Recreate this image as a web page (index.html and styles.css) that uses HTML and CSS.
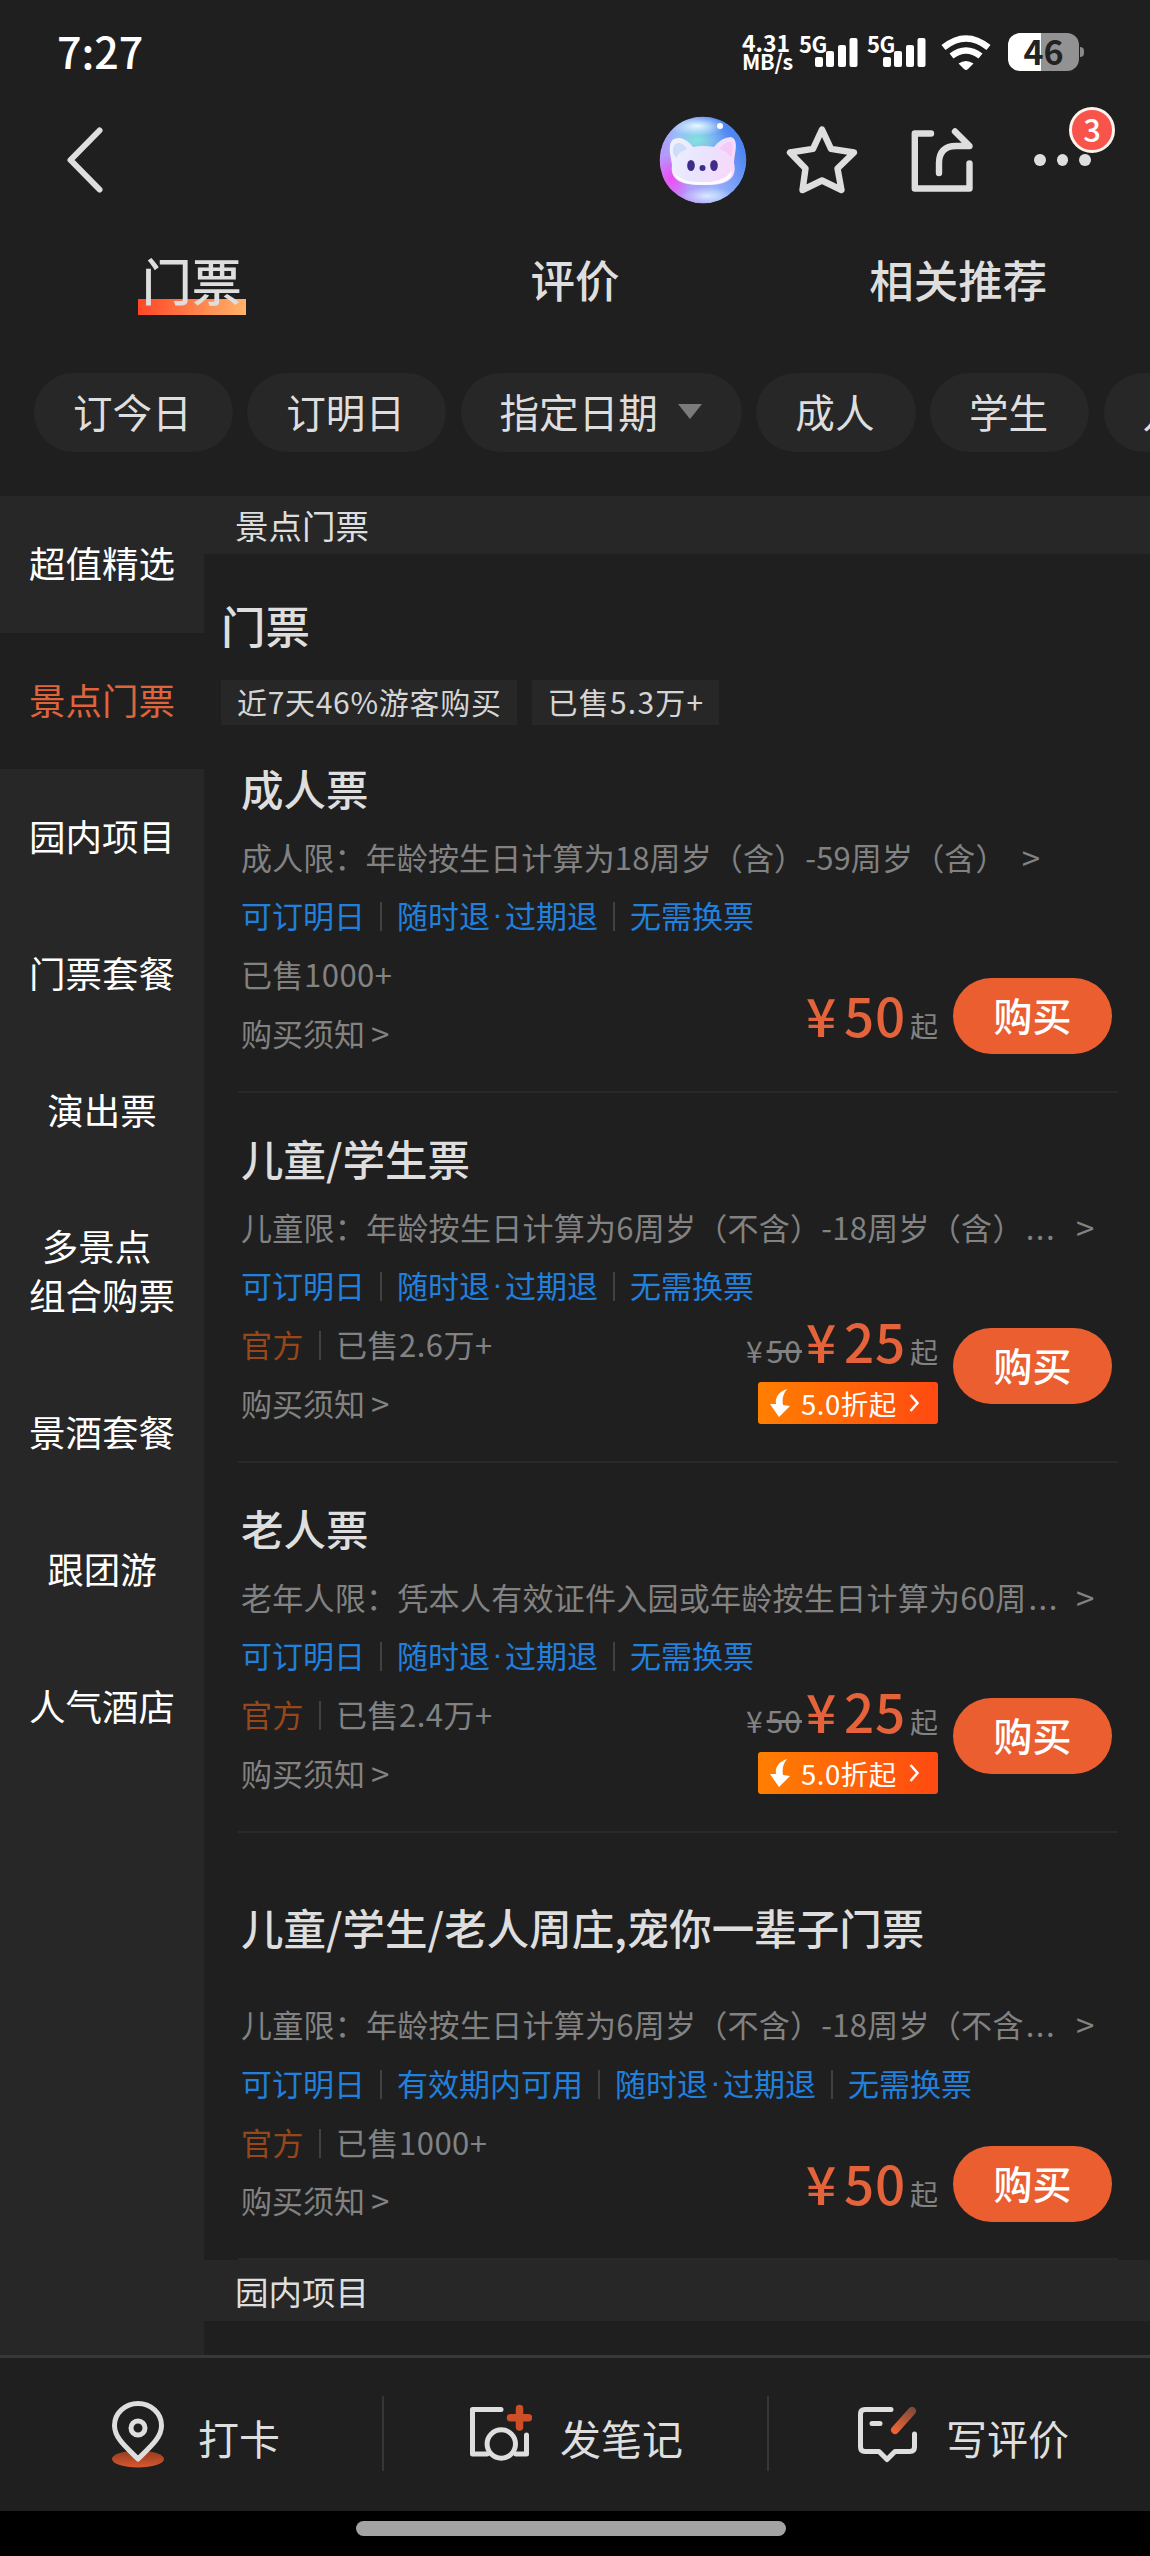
FILE: index.html
```html
<!DOCTYPE html>
<html lang="zh-CN">
<head>
<meta charset="utf-8">
<title>景点门票</title>
<link rel="stylesheet" href="styles.css">
</head>
<body>
<svg class="defs" width="0" height="0" aria-hidden="true">
  <defs>
    <linearGradient id="fade-orange" x1="0" y1="0" x2="0" y2="1"><stop offset="0" stop-color="#8f3c20"/><stop offset="1" stop-color="#d9582f"/></linearGradient>
    <linearGradient id="pencil" gradientUnits="userSpaceOnUse" x1="56" y1="6" x2="38" y2="30"><stop offset="0" stop-color="#7a4a38"/><stop offset="1" stop-color="#ee6233"/></linearGradient>
    <linearGradient id="orb" x1="0.1" y1="0.8" x2="0.9" y2="0.3"><stop offset="0" stop-color="#c08bf8"/><stop offset="0.45" stop-color="#9db4fb"/><stop offset="1" stop-color="#4d86f2"/></linearGradient>
    <radialGradient id="orb-pink"><stop offset="0" stop-color="#f04af4"/><stop offset="1" stop-color="#f04af4" stop-opacity="0"/></radialGradient>
    <radialGradient id="orb-mint"><stop offset="0" stop-color="#7fe6da"/><stop offset="1" stop-color="#8fd8f0" stop-opacity="0"/></radialGradient>
    <radialGradient id="orb-light"><stop offset="0" stop-color="#e4fbff"/><stop offset="1" stop-color="#dff4ff" stop-opacity="0"/></radialGradient>
    <linearGradient id="face" x1="0" y1="0" x2="1" y2="0.3"><stop offset="0" stop-color="#eef3ff"/><stop offset="0.55" stop-color="#e9e4fd"/><stop offset="1" stop-color="#f6d9fb"/></linearGradient>
    <clipPath id="orb-clip"><circle cx="44" cy="44" r="43.500"/></clipPath>
    <symbol id="signal" viewBox="0 0 44 30"><g fill="#fff"><rect x="0" y="20" width="8" height="10" rx="2"/><rect x="11" y="14" width="8" height="16" rx="2"/><rect x="23" y="8" width="8" height="22" rx="2"/><rect x="34.500" y="1" width="8" height="29" rx="2"/></g></symbol>
    <symbol id="drop" viewBox="0 0 20 28"><path d="M17 0C8 3 5 9 6 15L0 15 9 28 20 17 13 16C12 10 13 5 17 0Z" fill="#fff"/></symbol>
    <symbol id="more" viewBox="0 0 12 20"><path d="M2.500 2 9.500 10 2.500 18" fill="none" stroke="#fff" stroke-width="2.500"/></symbol>
  </defs>
</svg>
<div class="screen">
  <div class="status">
    <span class="clock">7:27</span>
    <div class="status-right">
      <div class="rate"><span>4.31</span><span>MB/s</span></div>
      <div class="net"><span>5G</span><svg width="44" height="30"><use href="#signal"/></svg></div>
      <div class="net"><span>5G</span><svg width="44" height="30"><use href="#signal"/></svg></div>
      <svg class="wifi" width="50" height="36" viewBox="0 0 50 36"><g fill="none" stroke="#fff" stroke-width="6.500"><path d="M2.500 12.500Q25 -5.500 47.500 12.500"/><path d="M10.500 21Q25 10 39.500 21"/></g><path d="M17.500 28.500Q25 23.500 32.500 28.500L27 34Q25 36 23 34Z" fill="#fff"/></svg>
      <div class="battery"><span class="level">46</span><i></i></div>
    </div>
  </div>

  <div class="nav">
    <svg class="back" width="40" height="68" viewBox="0 0 40 68"><path d="M34.500 4.500 5.500 34 34.500 63.500" fill="none" stroke="#dedede" stroke-width="6" stroke-linecap="round" stroke-linejoin="round"/></svg>
    <div class="nav-icons">
      <svg class="orb" width="88" height="88" viewBox="0 0 88 88"><g clip-path="url(#orb-clip)">
        <circle cx="44" cy="44" r="43.500" fill="url(#orb)"/>
        <ellipse cx="13" cy="62" rx="19" ry="24" fill="url(#orb-pink)"/>
        <ellipse cx="38" cy="24" rx="30" ry="19" fill="url(#orb-mint)"/>
        <ellipse cx="38" cy="10" rx="28" ry="10" fill="url(#orb-light)"/>
        <ellipse cx="48" cy="80" rx="26" ry="9" fill="url(#orb-light)" opacity=".8"/>
        <path d="M11 37Q9 21 21 22Q29 24 34 31Q44 29 55 31Q63 21 72 21Q79 23 76 38Q75 44 75 47C79 64 66 70 43 69C22 69 11 64 13 49Q12 43 11 37Z" fill="url(#face)"/>
        <path d="M14 37Q13 26 21 27Q26 29 28 33Q20 36 17 42Z" fill="#cddcf8"/>
        <path d="M60 33Q67 25 72 26Q75 30 72 41Q68 35 60 33Z" fill="#f5c8f7"/>
        <path d="M14 56Q23 67 44 66Q65 67 73 54Q74 69 44 69Q18 69 14 56Z" fill="#fff" opacity=".85"/>
        <ellipse cx="32" cy="49.500" rx="3.800" ry="5.500" fill="#3d2d86"/><ellipse cx="55" cy="49.500" rx="3.800" ry="5.500" fill="#3d2d86"/><circle cx="43.500" cy="52" r="3" fill="#3d2d86"/>
        <circle cx="61" cy="10" r="3" fill="#fff"/>
      </g></svg>
      <svg class="star" width="72" height="70" viewBox="0 0 72 70"><path d="M36 4.500 45 23.800 68 27.500 51.500 43.500 55.500 65 36 55.500 16.500 65 19.500 43.500 4 27.500 27 23.800Z" fill="none" stroke="#dedede" stroke-width="6.400" stroke-linejoin="round"/></svg>
      <svg class="share" width="64" height="66" viewBox="0 0 64 66"><g fill="none" stroke="#dedede" stroke-width="6.400" stroke-linecap="round" stroke-linejoin="round"><path d="M20 6.500H3.800V61.500H58.500V36.500"/><path d="M28 46V36Q28 19 45 19H58.500L44 4.500"/></g></svg>
      <div class="menu"><i></i><i></i><i></i><b>3</b></div>
    </div>
  </div>

  <div class="tabs"><div class="tab on"><span>门票</span></div><div class="tab"><span>评价</span></div><div class="tab"><span>相关推荐</span></div></div>

  <div class="chips"><span>订今日</span><span>订明日</span><span class="date">指定日期<i></i></span><span>成人</span><span>学生</span><span>儿童</span></div>

  <div class="main">
    <div class="side">
      <div>超值精选</div><div class="on">景点门票</div><div>园内项目</div><div>门票套餐</div><div>演出票</div>
      <div class="two"><span class="first">多景点</span><span>组合购票</span></div>
      <div>景酒套餐</div><div>跟团游</div><div>人气酒店</div>
    </div>
    <div class="list">
      <div class="section">景点门票</div>
      <div class="intro">
        <h2>门票</h2>
        <div class="facts"><span>近7天46%游客购买</span><span>已售5.3万+</span></div>
      </div>

      <div class="ticket">
        <h3>成人票</h3>
        <p class="limit"><span>成人限：年龄按生日计算为18周岁（含）-59周岁（含）</span><em>&gt;</em></p>
        <p class="perks"><span>可订明日</span><span>随时退<u>·</u>过期退</span><span>无需换票</span></p>
        <div class="foot">
          <div class="sales"><p><span>已售1000+</span></p><p class="notice">购买须知<em>&gt;</em></p></div>
          <div class="buy"><div class="cost"><div class="price"><b><i>¥</i>50</b><small>起</small></div></div><button>购买</button></div>
        </div>
      </div>

      <div class="ticket">
        <h3>儿童/学生票</h3>
        <p class="limit cut"><span>儿童限：年龄按生日计算为6周岁（不含）-18周岁（含）<q>...</q></span><em>&gt;</em></p>
        <p class="perks"><span>可订明日</span><span>随时退<u>·</u>过期退</span><span>无需换票</span></p>
        <div class="foot">
          <div class="sales"><p><span class="official">官方</span><span>已售2.6万+</span></p><p class="notice">购买须知<em>&gt;</em></p></div>
          <div class="buy"><div class="cost"><div class="price"><span class="was">¥<s>50</s></span><b><i>¥</i>25</b><small>起</small></div><div class="deal"><svg width="20" height="28"><use href="#drop"/></svg><span>5.0折起</span><svg width="12" height="20"><use href="#more"/></svg></div></div><button>购买</button></div>
        </div>
      </div>

      <div class="ticket">
        <h3>老人票</h3>
        <p class="limit cut"><span>老年人限：凭本人有效证件入园或年龄按生日计算为60周<q>...</q></span><em>&gt;</em></p>
        <p class="perks"><span>可订明日</span><span>随时退<u>·</u>过期退</span><span>无需换票</span></p>
        <div class="foot">
          <div class="sales"><p><span class="official">官方</span><span>已售2.4万+</span></p><p class="notice">购买须知<em>&gt;</em></p></div>
          <div class="buy"><div class="cost"><div class="price"><span class="was">¥<s>50</s></span><b><i>¥</i>25</b><small>起</small></div><div class="deal"><svg width="20" height="28"><use href="#drop"/></svg><span>5.0折起</span><svg width="12" height="20"><use href="#more"/></svg></div></div><button>购买</button></div>
        </div>
      </div>

      <div class="ticket tall">
        <h3>儿童/学生/老人周庄,宠你一辈子门票</h3>
        <p class="limit cut"><span>儿童限：年龄按生日计算为6周岁（不含）-18周岁（不含<q>...</q></span><em>&gt;</em></p>
        <p class="perks"><span>可订明日</span><span>有效期内可用</span><span>随时退<u>·</u>过期退</span><span>无需换票</span></p>
        <div class="foot">
          <div class="sales"><p><span class="official">官方</span><span>已售1000+</span></p><p class="notice">购买须知<em>&gt;</em></p></div>
          <div class="buy"><div class="cost"><div class="price"><b><i>¥</i>50</b><small>起</small></div></div><button>购买</button></div>
        </div>
      </div>

      <div class="section next">园内项目</div>
    </div>
  </div>

  <div class="actions">
    <div class="action pin">
      <svg width="54" height="68" viewBox="0 0 54 68"><ellipse cx="27" cy="59" rx="26" ry="8.500" fill="url(#fade-orange)"/><path d="M27 59C15 47 3.500 38 3.500 25.500A23.500 22 0 0 1 50.500 25.500C50.500 38 39 47 27 59Z" fill="#1f1f1f" stroke="#dedede" stroke-width="5" stroke-linejoin="round"/><circle cx="27" cy="28" r="7" fill="none" stroke="#dedede" stroke-width="5"/></svg>
      <span>打卡</span>
    </div>
    <div class="action note">
      <svg width="64" height="68" viewBox="0 0 64 68"><g fill="none" stroke="#dedede" stroke-width="5" stroke-linecap="round" stroke-linejoin="round"><path d="M33 9.500H4.500V54H19M48 54H58.500V35"/><circle cx="33.300" cy="44" r="14.200"/></g><path d="M51.500 8.500V27M42.500 17.700H60.500" stroke="#cc4f27" stroke-width="7.500" stroke-linecap="round"/></svg>
      <span>发笔记</span>
    </div>
    <div class="action review">
      <svg width="64" height="68" viewBox="0 0 64 68"><g fill="none" stroke="#dedede" stroke-width="5" stroke-linecap="round" stroke-linejoin="round"><path d="M35 9.500H9Q4.500 9.500 4.500 14V47Q4.500 51.500 9 51.500H23L31 59.500 39 51.500H54Q58.500 51.500 58.500 47V34"/><path d="M16 23.500H24"/></g><path d="M56 11 39 30" stroke="url(#pencil)" stroke-width="8" stroke-linecap="round"/></svg>
      <span>写评价</span>
    </div>
  </div>
  <div class="home"><i></i></div>
</div>
</body>
</html>
```
FILE: styles.css
```css
* { box-sizing: border-box; margin: 0; padding: 0; }
body { background: #1f1f1f; color: #dedede; font-family: "Noto Sans CJK SC", sans-serif; }
i, em { font-style: normal; }
svg { display: block; flex: none; }
.defs { position: absolute; }
.screen { width: 1150px; height: 2556px; overflow: hidden; display: flex; flex-direction: column; white-space: nowrap; }

/* status bar */
.status { height: 96px; padding: 11px 66px 0 57px; display: flex; justify-content: space-between; color: #fff; }
.clock { font-size: 43px; line-height: 78px; height: 78px; font-weight: 500; }
.status-right { display: flex; padding-top: 22px; }
.rate { width: 57px; margin-top: -1px; font: bold 23px/20px "Noto Sans CJK SC", sans-serif; display: flex; flex-direction: column; }
.rate span { height: 19px; }
.rate span + span { font-size: 21.500px; letter-spacing: -.3px; }
.net { width: 68px; display: flex; align-items: flex-start; }
.net span { width: 16px; font: bold 22px/21px "Noto Sans CJK SC", sans-serif; letter-spacing: -.5px; }
.net svg { margin-top: 4px; }
.wifi { margin: 2px 17px 0 6px; }
.battery { display: flex; align-items: center; height: 38px; }
.battery .level { width: 71px; height: 38px; border-radius: 12px; background: linear-gradient(90deg, #fff 46%, #929292 46%); color: #222; font: bold 34px/36px "Noto Sans CJK SC", sans-serif; text-align: center; }
.battery i { width: 4px; height: 10px; margin-left: 1px; border-radius: 0 5px 5px 0; background: #8a8a8a; }

/* navigation */
.nav { height: 128px; padding: 0 33px 0 65px; display: flex; justify-content: space-between; align-items: center; }
.nav-icons { display: flex; align-items: center; }
.star { margin-left: 39px; }
.share { margin-left: 53px; }
.menu { position: relative; display: flex; gap: 11px; width: 83px; margin-left: 59px; }
.menu i { width: 11.500px; height: 12px; border-radius: 50%; background: #dedede; }
.menu b { position: absolute; left: 35px; top: -47px; width: 46px; height: 46px; border: 3px solid #fff3ee; border-radius: 50%; background: #f9544c; color: #fff; font-size: 31px; line-height: 38px; font-weight: 500; text-align: center; }

/* tabs */
.tabs { height: 149px; display: grid; grid-template-columns: repeat(3, 1fr); font-size: 44.500px; font-weight: 500; line-height: 62px; text-align: center; padding-top: 24px; }
.tab span { display: inline-block; height: 68px; }
.tab.on span { font-size: 50px; padding: 0 4px; background: linear-gradient(100deg, #ff4526, #ffb56a) 0 51px / 100% 16px no-repeat; }

/* filters */
.chips { height: 123px; padding-left: 34px; display: flex; align-items: flex-start; gap: 14.500px; font-size: 39.600px; overflow: hidden; }
.chips span { flex: none; height: 79px; line-height: 76px; padding: 0 41px 0 39px; border-radius: 40px; background: #272727; }
.chips .date { display: flex; align-items: center; gap: 20px; padding: 0 40px 3px 39px; }
.chips .date i { border: 12.500px solid transparent; border-top: 15px solid #7b7b7b; border-bottom: 0; }

/* columns */
.main { height: 1859px; display: flex; }
.side { width: 204px; background: #272727; color: #fff; font-size: 36.500px; text-align: center; }
.side div { height: 136.700px; line-height: 133px; }
.side .on { background: #1f1f1f; color: #df643c; }
.side .two { height: 186px; padding-top: 42px; display: flex; flex-direction: column; line-height: 49px; }
.side .first { padding-right: 11px; }
.list { flex: 1; min-width: 0; }
.section { height: 58px; padding-left: 31px; background: #272727; font-size: 33.500px; line-height: 58px; }
.section.next { height: 61px; line-height: 61px; }
.intro { height: 169px; padding: 40px 0 0 17px; }
.intro h2 { height: 86px; font-size: 44.500px; line-height: 62px; font-weight: 500; }
.facts { display: flex; gap: 15px; font-size: 30px; line-height: 42px; color: #d5d5d5; }
.facts span { height: 45px; padding: 0 15px 0 16px; letter-spacing: .7px; background: #272727; }
.facts span + span { letter-spacing: 1.200px; }

/* tickets */
.ticket { height: 370px; margin: 0 32px 0 34px; padding: 29px 0 0 3px; border-bottom: 2px solid #292929; font-size: 31px; color: #828282; }
.ticket h3 { height: 76.500px; line-height: 71px; font-size: 42.500px; font-weight: 500; color: #dedede; }
.ticket p { height: 58.800px; line-height: 56px; display: flex; }
.limit { letter-spacing: .15px; }
.ticket em { font-size: 33px; }
.limit em { width: 18px; margin-left: 15px; }
.limit q { quotes: none; display: inline-block; width: 33px; padding-left: 2px; letter-spacing: 1.500px; }
.limit.cut { letter-spacing: .27px; }
.limit.cut span { width: 835px; }
.limit.cut em { margin: 0; }
.perks { color: #2180dc; }
.perks u { display: inline-block; width: 15px; font-family: "Liberation Sans", sans-serif; text-align: center; text-decoration: none; }
.foot p span + span, .perks span + span { display: flex; align-items: center; height: 56px; }
.ticket p span + span::before { content: ""; width: 2px; height: 29px; margin: 3px 15px 0; background: #414141; }
.official { color: #98471a; }
.sales p span { letter-spacing: .5px; }
.foot { height: 146px; display: flex; justify-content: space-between; }
.notice em { margin-left: 6px; }
.buy { height: 116px; margin: -8px 6px 0 0; display: flex; align-items: center; gap: 15px; align-self: flex-start; }
.cost { display: flex; flex-direction: column; align-items: flex-end; gap: 6px; }
.price { height: 68px; display: flex; align-items: baseline; line-height: 64px; }
.price b { font-size: 53px; font-weight: 500; color: #e5633a; letter-spacing: .8px; }
.price b i { margin-right: 7px; }
.was { font-size: 30px; margin-right: 4px; }
.was s { margin-left: 4px; letter-spacing: 1px; }
.price small { font-size: 28px; margin-left: 4px; }
.deal { width: 180px; height: 42px; padding-left: 12px; display: flex; align-items: center; gap: 11px; border-radius: 3px; background: linear-gradient(90deg, #ff7f00, #ff4a12); color: #fff; font-size: 27.500px; line-height: 40px; }
.deal span { width: 99px; letter-spacing: .5px; }
.deal span + svg { margin-left: -3px; }
button { width: 159px; height: 76px; padding-bottom: 4px; border: 0; border-radius: 38px; background: #ea5e30; color: #fff; font: 500 39px/70px "Noto Sans CJK SC", sans-serif; }
.foot > .buy:has(.price b:first-child) { height: 76px; margin-top: 32px; }
.tall { height: 427px; padding-top: 58px; }
.tall h3 { height: 105px; }

/* bottom actions */
.actions { height: 156px; border-top: 3px solid #383838; display: grid; grid-template-columns: 384px 385px 381px; font-size: 41px; line-height: 56px; }
.action { height: 75px; margin-top: 38px; display: flex; align-items: center; border-right: 2px solid #363636; }
.action:last-child { border: 0; }
.action span { padding-top: 7px; }
.pin { padding-left: 111px; gap: 33px; }
.note { padding-left: 84px; gap: 28px; }
.review { padding-left: 87px; gap: 26px; }
.home { height: 45px; background: #000; display: flex; justify-content: center; padding: 10px 8px 0 0; }
.home i { width: 430px; height: 15px; border-radius: 8px; background: #a3a3a3; }
```
